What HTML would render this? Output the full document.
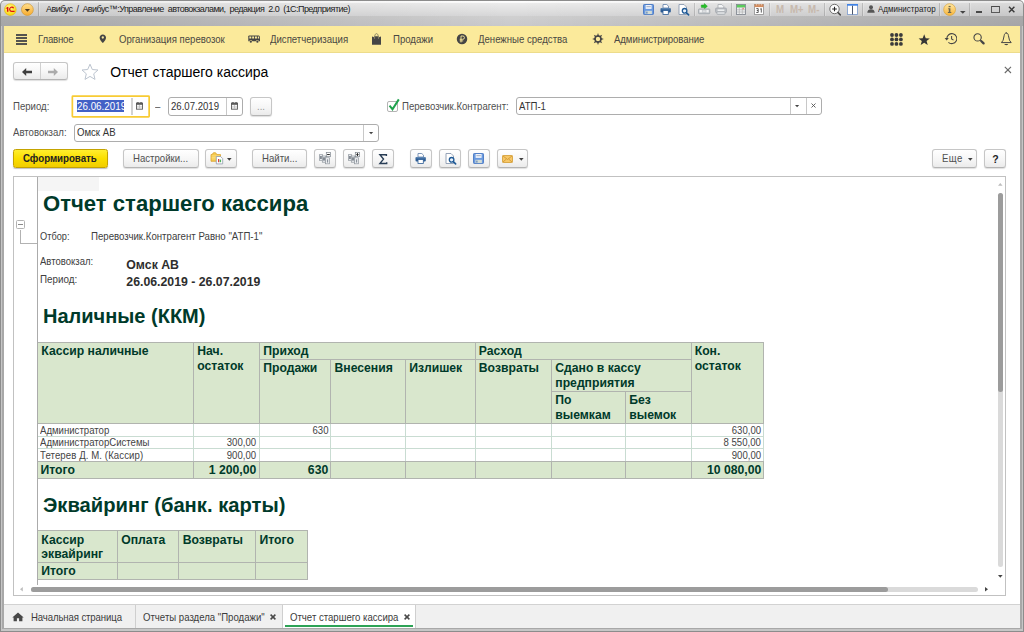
<!DOCTYPE html>
<html><head><meta charset="utf-8"><title>1C</title>
<style>
html,body{margin:0;padding:0}
body{width:1024px;height:632px;position:relative;overflow:hidden;background:#fff;font-family:"Liberation Sans", sans-serif;}
.t{position:absolute;line-height:14px;white-space:pre;font-family:"Liberation Sans", sans-serif;}
.btn{position:absolute;box-sizing:border-box;border:1px solid #c6c6c6;border-bottom-color:#b4b4b4;border-radius:3px;background:linear-gradient(#ffffff,#f6f6f6 55%,#ebebeb);box-shadow:0 1px 1px rgba(0,0,0,.13);}
.inp{position:absolute;box-sizing:border-box;border:1px solid #adadad;border-radius:3px;background:#fff;}
</style></head><body>
<div style="position:absolute;left:0;top:0;width:1024px;height:632px;background:#8c8c8c;border-radius:5px 5px 0 0;"></div>
<div style="position:absolute;left:1px;top:1px;width:1022px;height:15px;border-radius:4px 4px 0 0;background:linear-gradient(90deg,rgba(0,0,0,.075),rgba(0,0,0,.03) 30%,rgba(0,0,0,0) 50%,rgba(0,0,0,.03) 70%,rgba(0,0,0,.075)),linear-gradient(#ffffff 0px,#fbfbfb 1.5px,#ebebeb 2.5px,#d7d7d8 15px);"></div>
<div style="position:absolute;left:1px;top:16px;width:1022px;height:10px;background:linear-gradient(90deg,rgba(0,0,0,.18),rgba(0,0,0,.075) 30%,rgba(0,0,0,0) 50%,rgba(0,0,0,.075) 70%,rgba(0,0,0,.18)),linear-gradient(#d0d0d0,#c9c9cc);"></div>
<div style="position:absolute;left:1px;top:26px;width:1.3px;height:605px;background:#c6c6c6;"></div>
<div style="position:absolute;left:2.3px;top:26px;width:1.6px;height:603px;background:#a8a8a8;"></div>
<div style="position:absolute;left:1020.1px;top:26px;width:1.5px;height:603px;background:#a8a8a8;"></div>
<div style="position:absolute;left:1021.6px;top:26px;width:1.3px;height:605px;background:#c6c6c6;"></div>
<div style="position:absolute;left:2.3px;top:627.8px;width:1019.3px;height:1.4px;background:#a8a8a8;"></div>
<div style="position:absolute;left:1px;top:629.2px;width:1022px;height:1.5px;background:#c6c6c6;"></div>
<div style="position:absolute;left:3.9px;top:26px;width:1016.2px;height:27.4px;background:#fbea9b;box-shadow:inset 0 -1px 0 rgba(120,100,0,.10);"></div>
<div style="position:absolute;left:3.9px;top:53.4px;width:1016.2px;height:551px;background:#fff;"></div>
<div style="position:absolute;left:3.9px;top:604px;width:1016.2px;height:23.8px;background:#f0f0f0;"></div>
<div style="position:absolute;left:3.9px;top:603.9px;width:1016.2px;height:1.2px;background:#d2d2d2;"></div>
<svg style="position:absolute;left:4px;top:3px" width="13" height="13" viewBox="0 0 13 13"><defs><radialGradient id="g1" cx="45%" cy="35%" r="70%"><stop offset="0" stop-color="#fffb8a"/><stop offset="1" stop-color="#f9d000"/></radialGradient></defs>
<circle cx="6.3" cy="6.6" r="5.9" fill="url(#g1)" stroke="#e3b400" stroke-width=".5"/>
<path d="M1.8 5.3l1.600-1.300h1v4.700H3V5.300l-1.200 .8z" fill="#e00d0d"/>
<path d="M9.600 5.200a2.100 2.100 0 1 0-1.800 3.100h2.800" fill="none" stroke="#e00d0d" stroke-width="1.250"/></svg>
<svg style="position:absolute;left:21px;top:3px" width="13" height="13" viewBox="0 0 13 13"><defs><linearGradient id="g2" x1="0" y1="0" x2="0" y2="1"><stop offset="0" stop-color="#ffdf8c"/><stop offset="1" stop-color="#f8ab2e"/></linearGradient></defs>
<circle cx="6.4" cy="6.6" r="5.9" fill="url(#g2)" stroke="#cf9a3a" stroke-width=".7"/>
<path d="M3.800 6.100h5.200L6.400 8.800z" fill="#4a3a20"/></svg>
<div style="position:absolute;left:38px;top:2px;width:1px;height:14px;background:rgba(0,0,0,.17);"></div>
<div style="position:absolute;left:39px;top:2px;width:1px;height:14px;background:rgba(255,255,255,.22);"></div>
<span class="t" style="left:46px;top:2.48px;font-size:9px;font-weight:400;color:#1c1c1c;letter-spacing:-0.55px;word-spacing:2.1px;">Авибус / Авибус™:Управление автовокзалами, редакция 2.0 (1С:Предприятие)</span>
<svg style="position:absolute;left:643px;top:4px" width="12" height="11" viewBox="0 0 12 11"><rect x=".5" y=".5" width="10" height="10" rx=".8" fill="#6a9ae0" stroke="#4877c2" stroke-width=".9"/>
<rect x="2.6" y="1" width="6" height="3.900" fill="#edf2fb"/><rect x="3.400" y="2" width="4.400" height="1.200" fill="#aeb9cc"/><rect x="2.400" y="6.800" width="6.500" height="3.300" fill="#d3dcd6"/><rect x="3.400" y="7.600" width="1" height="2" fill="#3f6fb8"/></svg>
<svg style="position:absolute;left:660px;top:4px" width="12" height="11" viewBox="0 0 12 11"><path d="M3 4V.5h3.800l1.700 1.700V4z" fill="#fff" stroke="#5f7fa8" stroke-width=".8"/>
<rect x=".5" y="3.900" width="10.300" height="4.600" rx="1.100" fill="#2c5c94"/><rect x="1.200" y="4.300" width="8.900" height="1" fill="#6f96bf"/>
<rect x="3" y="6.600" width="5.300" height="3.900" fill="#fff" stroke="#2c5c94" stroke-width=".8"/></svg>
<svg style="position:absolute;left:678px;top:4px" width="12" height="12" viewBox="0 0 12 12"><path d="M1 .5h5l2.5 2.5v7.5H1z" fill="#fff" stroke="#8a9ab0" stroke-width=".9"/>
<circle cx="6.6" cy="6.8" r="2.3" fill="#eaf2fb" stroke="#1f5a96" stroke-width="1.3"/><path d="M8.3 8.6l2.3 2.3" stroke="#1f5a96" stroke-width="1.6" stroke-linecap="round"/></svg>
<div style="position:absolute;left:694px;top:3px;width:1px;height:13px;background:rgba(0,0,0,.15);"></div>
<div style="position:absolute;left:695px;top:3px;width:1px;height:13px;background:rgba(255,255,255,.22);"></div>
<svg style="position:absolute;left:698px;top:3px" width="13" height="12" viewBox="0 0 13 12"><path d="M6.300 .5l3.100 2.700-3.100 2.700V4.400H3.300V2h3z" fill="#27c12a" stroke="#189a1e" stroke-width=".45"/>
<rect x=".5" y="5.900" width="11.300" height="4.800" rx=".8" fill="#c3c7cb" stroke="#9aa0a6" stroke-width=".7"/><rect x="1.600" y="7" width="2.300" height="2.300" fill="#f2f3f4"/><rect x="8.400" y="7" width="2.300" height="2.300" fill="#f2f3f4"/><rect x="4.600" y="7.500" width="3.100" height="1.300" fill="#e4e6e8"/></svg>
<svg style="position:absolute;left:715px;top:4px" width="12" height="11" viewBox="0 0 12 11"><path d="M3 4.300V.5h3.800l2 2V4.300z" fill="#f4f5f6" stroke="#a4a9ae" stroke-width=".8"/>
<rect x=".5" y="4" width="11" height="4.700" rx="1.100" fill="#b9bdc2" stroke="#9aa0a6" stroke-width=".6"/><rect x="2.600" y="5.400" width="6.800" height="1.600" fill="#eceeef"/>
<rect x="2" y="7.600" width="8" height="2.900" rx=".6" fill="#d9dcdf" stroke="#a4a9ae" stroke-width=".7"/></svg>
<div style="position:absolute;left:731px;top:3px;width:1px;height:13px;background:rgba(0,0,0,.15);"></div>
<div style="position:absolute;left:732px;top:3px;width:1px;height:13px;background:rgba(255,255,255,.22);"></div>
<svg style="position:absolute;left:736px;top:4px" width="10" height="11" viewBox="0 0 10 11"><rect x=".5" y=".5" width="9" height="10" fill="#eceef0" stroke="#858b93" stroke-width=".9"/>
<rect x=".9" y=".9" width="8.2" height="2.600" fill="#5ccb5c"/>
<path d="M3.3 3.5v6.8M.9 5.8h8.2M.9 8h8.2M6.3 3.5v6.8" stroke="#aaa" stroke-width=".6"/><rect x="6.5" y="3.8" width="1.6" height="1.6" fill="#e98a8a"/></svg>
<svg style="position:absolute;left:754px;top:4px" width="10" height="11" viewBox="0 0 10 11"><rect x=".5" y=".5" width="9" height="10" fill="#ffffff" stroke="#9a9a9a" stroke-width=".9"/>
<rect x=".5" y=".3" width="9" height="2.800" fill="#d18a5c"/><path d="M2.500 0v1.500M5 0v1.500M7.500 0v1.500" stroke="#f0d0b8" stroke-width=".7"/>
<path d="M2.300 4.600h1.900v1.900h-1.300 1.300v2h-1.900M6.200 5.200l1.100-.7v4.100" fill="none" stroke="#565656" stroke-width=".95"/></svg>
<div style="position:absolute;left:769px;top:3px;width:1px;height:13px;background:rgba(0,0,0,.15);"></div>
<div style="position:absolute;left:770px;top:3px;width:1px;height:13px;background:rgba(255,255,255,.22);"></div>
<span class="t" style="left:775.5px;top:2.26px;font-size:10.5px;font-weight:700;color:#c7b9ad;transform:scaleX(0.925);transform-origin:left center;">M</span>
<span class="t" style="left:790px;top:2.26px;font-size:10.5px;font-weight:700;color:#c7b9ad;letter-spacing:-0.3px;transform:scaleX(0.925);transform-origin:left center;">M+</span>
<span class="t" style="left:807.7px;top:2.26px;font-size:10.5px;font-weight:700;color:#c7b9ad;letter-spacing:0.2px;transform:scaleX(0.925);transform-origin:left center;">M-</span>
<div style="position:absolute;left:824px;top:3px;width:1px;height:13px;background:rgba(0,0,0,.15);"></div>
<div style="position:absolute;left:825px;top:3px;width:1px;height:13px;background:rgba(255,255,255,.22);"></div>
<svg style="position:absolute;left:828px;top:3px" width="14" height="14" viewBox="0 0 14 14"><circle cx="6.5" cy="6" r="4.7" fill="#fcfcfc" stroke="#5a5a5a" stroke-width=".85"/><path d="M4.2 6h4.600M6.500 3.700v4.600" stroke="#222" stroke-width="1.050"/><path d="M10 9.600l2.300 2.300" stroke="#4a4a4a" stroke-width="1.500" stroke-linecap="round"/></svg>
<svg style="position:absolute;left:847px;top:4px" width="11" height="11" viewBox="0 0 11 11"><rect x=".5" y=".5" width="10" height="10" fill="#fff" stroke="#86a2cf" stroke-width=".9"/><rect x="0" y="0" width="11" height="1.700" fill="#3f82e6"/><path d="M5.500 1.700v8.800" stroke="#4b566b" stroke-width="1"/></svg>
<div style="position:absolute;left:862px;top:3px;width:1px;height:13px;background:rgba(0,0,0,.15);"></div>
<div style="position:absolute;left:863px;top:3px;width:1px;height:13px;background:rgba(255,255,255,.22);"></div>
<svg style="position:absolute;left:867px;top:5px" width="8" height="8" viewBox="0 0 8 8"><circle cx="4" cy="2.3" r="2" fill="#555"/><path d="M.3 7.8c0-2.6 1.6-3.6 3.7-3.6s3.7 1 3.7 3.6z" fill="#555"/></svg>
<span class="t" style="left:877.5px;top:2.20px;font-size:9.8px;font-weight:400;color:#1e1e1e;transform:scaleX(.815);transform-origin:0 0;">Администратор</span>
<div style="position:absolute;left:939px;top:3px;width:1px;height:13px;background:rgba(0,0,0,.15);"></div>
<div style="position:absolute;left:940px;top:3px;width:1px;height:13px;background:rgba(255,255,255,.22);"></div>
<svg style="position:absolute;left:943px;top:3px" width="13" height="13" viewBox="0 0 13 13"><defs><linearGradient id="g3" x1="0" y1="0" x2="0" y2="1"><stop offset="0" stop-color="#ffe8a4"/><stop offset="1" stop-color="#f8b43a"/></linearGradient></defs>
<circle cx="6.600" cy="6.600" r="5.900" fill="url(#g3)" stroke="#d9a53e" stroke-width=".7"/>
<rect x="5.600" y="2.900" width="2" height="1.300" fill="#6b6650"/><path d="M5.200 5.300h2.200v3.700h.9v1H4.900v-1h.9V6.300h-.6z" fill="#6b6650"/></svg>
<svg style="position:absolute;left:960px;top:11px" width="6" height="3" viewBox="0 0 6 3"><path d="M0 0h5.6L2.8 2.8z" fill="#444"/></svg>
<div style="position:absolute;left:969px;top:3px;width:1px;height:13px;background:rgba(0,0,0,.15);"></div>
<div style="position:absolute;left:970px;top:3px;width:1px;height:13px;background:rgba(255,255,255,.22);"></div>
<div style="position:absolute;left:975.8px;top:11.1px;width:6px;height:1.8px;background:#484848;"></div>
<div style="position:absolute;left:991.2px;top:5.9px;width:8.4px;height:7px;border:1px solid #5a5a5a;border-top:1.700px solid #4a4a4a;box-sizing:border-box;"></div>
<svg style="position:absolute;left:1008px;top:6px" width="8" height="7" viewBox="0 0 8 7"><path d="M1 .8l5.400 5.400M6.400 .8L1 6.200" stroke="#3a3a3a" stroke-width="1.450"/></svg>
<div style="position:absolute;left:16.4px;top:34.3px;width:10.6px;height:1.5px;background:#55544f;"></div>
<div style="position:absolute;left:16.4px;top:37.349999999999994px;width:10.6px;height:1.5px;background:#55544f;"></div>
<div style="position:absolute;left:16.4px;top:40.4px;width:10.6px;height:1.5px;background:#55544f;"></div>
<div style="position:absolute;left:16.4px;top:43.449999999999996px;width:10.6px;height:1.5px;background:#55544f;"></div>
<span class="t" style="left:38px;top:32.06px;font-size:10.5px;font-weight:400;color:#4a4843;letter-spacing:-.2px;transform:scaleX(0.914);transform-origin:left center;">Главное</span>
<svg style="position:absolute;left:98px;top:34.4px" width="10" height="10" viewBox="0 0 10 10"><path d="M4.800 .6c-1.800 0-3.200 1.400-3.200 3.100 0 2.200 3.200 5.400 3.200 5.400s3.200-3.200 3.200-5.400C8 2 6.600 .6 4.800 .6z" fill="#454545"/><circle cx="4.800" cy="3.500" r="1.150" fill="#fbea9b"/></svg>
<span class="t" style="left:119.3px;top:32.06px;font-size:10.5px;font-weight:400;color:#4a4843;transform:scaleX(0.914);transform-origin:left center;">Организация перевозок</span>
<svg style="position:absolute;left:247.7px;top:35.2px" width="12.6" height="8.3" viewBox="0 0 13 8.500"><path d="M1.200 .4h9.400c.8 0 1.400 .5 1.600 1.300l.5 2.200v2.400H.3V1.300C.3 .8 .7 .4 1.200 .4z" fill="#454545"/>
<rect x="1.400" y="1.500" width="2" height="2.100" fill="#fbea9b"/><rect x="4.300" y="1.500" width="2" height="2.100" fill="#fbea9b"/><rect x="7.200" y="1.500" width="2" height="2.100" fill="#fbea9b"/><path d="M10.100 1.500h1.100l.5 2.100h-1.600z" fill="#fbea9b"/>
<circle cx="2.900" cy="6.800" r="1.650" fill="#fbea9b"/><circle cx="9.700" cy="6.800" r="1.650" fill="#fbea9b"/>
<circle cx="2.900" cy="6.900" r="1.150" fill="#454545"/><circle cx="9.700" cy="6.900" r="1.150" fill="#454545"/></svg>
<span class="t" style="left:269.8px;top:32.06px;font-size:10.5px;font-weight:400;color:#4a4843;transform:scaleX(0.914);transform-origin:left center;">Диспетчеризация</span>
<svg style="position:absolute;left:371px;top:33px" width="11" height="12" viewBox="0 0 11 12"><path d="M1 3.300l1.300 .9 1.200-.9h4l1.200 .9 1.300-.9v8.500H1z" fill="#454545"/><path d="M3.500 5.800C3.500 2.200 4.300 .6 5.500 .6s2 1.600 2 5.200" fill="none" stroke="#8d8768" stroke-width=".95"/></svg>
<span class="t" style="left:393.2px;top:32.06px;font-size:10.5px;font-weight:400;color:#4a4843;transform:scaleX(0.914);transform-origin:left center;">Продажи</span>
<svg style="position:absolute;left:456.1px;top:33.2px" width="12" height="12" viewBox="0 0 12 12"><circle cx="6" cy="6" r="5.250" fill="#454545"/><path d="M5 9.400V3h1.800a1.650 1.650 0 0 1 0 3.300H3.700M3.700 7.900h3.500" fill="none" stroke="#fbea9b" stroke-width=".9"/></svg>
<span class="t" style="left:478.2px;top:32.06px;font-size:10.5px;font-weight:400;color:#4a4843;transform:scaleX(0.914);transform-origin:left center;">Денежные средства</span>
<svg style="position:absolute;left:591.5px;top:33.4px" width="12" height="12" viewBox="0 0 12 12"><path d="M4.750 3.500L6 .1l1.250 3.400z" transform="rotate(0 6 6)" fill="#454545"/><path d="M4.750 3.500L6 .1l1.250 3.400z" transform="rotate(45 6 6)" fill="#454545"/><path d="M4.750 3.500L6 .1l1.250 3.400z" transform="rotate(90 6 6)" fill="#454545"/><path d="M4.750 3.500L6 .1l1.250 3.400z" transform="rotate(135 6 6)" fill="#454545"/><path d="M4.750 3.500L6 .1l1.250 3.400z" transform="rotate(180 6 6)" fill="#454545"/><path d="M4.750 3.500L6 .1l1.250 3.400z" transform="rotate(225 6 6)" fill="#454545"/><path d="M4.750 3.500L6 .1l1.250 3.400z" transform="rotate(270 6 6)" fill="#454545"/><path d="M4.750 3.500L6 .1l1.250 3.400z" transform="rotate(315 6 6)" fill="#454545"/><circle cx="6" cy="6" r="2.950" fill="none" stroke="#454545" stroke-width="1.500"/></svg>
<span class="t" style="left:613.8px;top:32.06px;font-size:10.5px;font-weight:400;color:#4a4843;letter-spacing:-.08px;transform:scaleX(0.914);transform-origin:left center;">Администрирование</span>
<svg style="position:absolute;left:890px;top:32.6px" width="13" height="13" viewBox="0 0 13 13"><circle cx="2.00" cy="2.00" r="1.900" fill="#3b3b3b"/><circle cx="2.00" cy="6.45" r="1.900" fill="#3b3b3b"/><circle cx="2.00" cy="10.90" r="1.900" fill="#3b3b3b"/><circle cx="6.45" cy="2.00" r="1.900" fill="#3b3b3b"/><circle cx="6.45" cy="6.45" r="1.900" fill="#3b3b3b"/><circle cx="6.45" cy="10.90" r="1.900" fill="#3b3b3b"/><circle cx="10.90" cy="2.00" r="1.900" fill="#3b3b3b"/><circle cx="10.90" cy="6.45" r="1.900" fill="#3b3b3b"/><circle cx="10.90" cy="10.90" r="1.900" fill="#3b3b3b"/></svg>
<svg style="position:absolute;left:917.7px;top:33.8px" width="12.4" height="11.6" viewBox="0 0 13 12"><path d="M6.500 .3l1.600 4.100 4.300 .2-3.400 2.700 1.200 4.200L6.500 9.100 2.800 11.500 4 7.300 .6 4.600l4.300-.2z" fill="#363636"/></svg>
<svg style="position:absolute;left:943.9px;top:32.1px" width="13.5" height="13" viewBox="0 0 13.5 13"><path d="M2.800 6.700a5 5 0 1 1 1.600 3.600" fill="none" stroke="#454545" stroke-width="1.050"/><path d="M.6 5.900h4.200L2.700 8.400z" fill="#454545"/><path d="M7.600 3.900v3l1.900 1.200" fill="none" stroke="#454545" stroke-width="1.050"/></svg>
<svg style="position:absolute;left:972px;top:32px" width="14" height="14" viewBox="0 0 14 14"><circle cx="5.600" cy="5.400" r="3.650" fill="none" stroke="#454545" stroke-width="1.100"/><path d="M8.300 8.100l1 1" stroke="#454545" stroke-width="1.100"/><path d="M9.400 9.200l2.200 2.200" stroke="#454545" stroke-width="2.300" stroke-linecap="round"/></svg>
<svg style="position:absolute;left:1000px;top:32px" width="13" height="14" viewBox="0 0 13 14"><path d="M6.300 1C5.100 1 4.400 2 4.200 3.500L3.100 8.300 1.400 10.600H11.200L9.500 8.300 8.400 3.500C8.200 2 7.500 1 6.300 1z" fill="none" stroke="#454545" stroke-width="1" stroke-linejoin="round"/><path d="M4.300 12.100h3.900a1.950 1.150 0 0 1-3.900 0z" fill="#454545"/><circle cx="6.300" cy=".9" r=".6" fill="#454545"/></svg>
<div class="btn" style="left:13px;top:62px;width:54.500px;height:18px;"></div>
<div style="position:absolute;left:40px;top:63px;width:1px;height:16px;background:#d0d0d0;"></div>
<svg style="position:absolute;left:21px;top:67px" width="12" height="10" viewBox="0 0 12 10"><path d="M1 5l4.200-4v2.800h5.800v2.400H5.200V9z" fill="#3f3f3f"/></svg>
<svg style="position:absolute;left:47px;top:67px" width="12" height="10" viewBox="0 0 12 10"><path d="M11 5L6.800 1v2.800H1v2.400h5.800V9z" fill="#ababab"/></svg>
<svg style="position:absolute;left:80.5px;top:63px" width="18" height="17" viewBox="0 0 18 17"><path d="M9 1.200l2.300 5.300 5.700 .5-4.300 3.800 1.300 5.600L9 13.400 4 16.400l1.300-5.600L1 7l5.700-.5z" fill="#fff" stroke="#bcc4cf" stroke-width="1"/></svg>
<span class="t" style="left:110.2px;top:65.15px;font-size:14px;font-weight:400;color:#000;">Отчет старшего кассира</span>
<svg style="position:absolute;left:1004px;top:66px" width="8" height="8" viewBox="0 0 8 8"><path d="M.8 .8l6.200 6.200M7 .8L.8 7" stroke="#6a6a6a" stroke-width="1.100"/></svg>
<span class="t" style="left:13px;top:98.86px;font-size:10.5px;font-weight:400;color:#4f4f4f;transform:scaleX(0.914);transform-origin:left center;">Период:</span>
<svg style="position:absolute;left:70px;top:94px" width="82" height="26" viewBox="0 0 82 26"><rect x="2.350" y="2.150" width="76.800" height="20.800" rx=".6" fill="#fff" stroke="#f8cb34" stroke-width="1.700"/></svg>
<div style="position:absolute;left:76.8px;top:100.3px;width:47.3px;height:11.7px;background:#4261c6;"></div>
<div style="position:absolute;left:77px;top:100px;width:47.100px;height:13px;overflow:hidden;"><span class="t" style="left:.3px;top:-0.900px;font-size:10.500px;color:#fff;transform:scaleX(.935);transform-origin:left center;">26.06.2019</span></div>
<div style="position:absolute;left:131.4px;top:98.2px;width:1.4px;height:16.6px;background:#d2d2d2;"></div>
<svg style="position:absolute;left:136px;top:102.3px" width="7" height="7.7" viewBox="0 0 7 7.7"><rect x="1.300" y="0" width="1.300" height="1.400" fill="#5a5a5a"/><rect x="4.400" y="0" width="1.300" height="1.400" fill="#5a5a5a"/><rect x=".45" y="1.200" width="6.100" height="6" fill="#f6f6f6" stroke="#5a5a5a" stroke-width=".9"/><rect x="0" y=".8" width="7" height="2" fill="#5a5a5a"/><path d="M3.500 3v3.700M1 4.950h5" stroke="#b4b4b4" stroke-width=".7"/></svg>
<span class="t" style="left:155px;top:98.66px;font-size:10.5px;font-weight:400;color:#4f4f4f;transform:scaleX(0.914);transform-origin:left center;">–</span>
<div class="inp" style="left:168px;top:97px;width:74.500px;height:19px;"></div>
<span class="t" style="left:171px;top:98.86px;font-size:10.5px;font-weight:400;color:#333;transform:scaleX(0.914);transform-origin:left center;">26.07.2019</span>
<div style="position:absolute;left:226px;top:98px;width:1px;height:17px;background:#c8c8c8;"></div>
<svg style="position:absolute;left:231px;top:102.3px" width="7" height="7.7" viewBox="0 0 7 7.7"><rect x="1.300" y="0" width="1.300" height="1.400" fill="#5a5a5a"/><rect x="4.400" y="0" width="1.300" height="1.400" fill="#5a5a5a"/><rect x=".45" y="1.200" width="6.100" height="6" fill="#f6f6f6" stroke="#5a5a5a" stroke-width=".9"/><rect x="0" y=".8" width="7" height="2" fill="#5a5a5a"/><path d="M3.500 3v3.700M1 4.950h5" stroke="#b4b4b4" stroke-width=".7"/></svg>
<div class="btn" style="left:250px;top:97px;width:22px;height:19px;"></div>
<span class="t" style="left:257px;top:98.86px;font-size:10.5px;font-weight:400;color:#999;transform:scaleX(0.914);transform-origin:left center;">...</span>
<div style="position:absolute;left:387px;top:101px;width:11px;height:10.500px;box-sizing:border-box;border:1px solid #b4b4b4;border-radius:2px;background:#fff;"></div>
<svg style="position:absolute;left:387px;top:98px" width="14" height="14" viewBox="0 0 14 14"><path d="M2.500 7.600l3 3.600 6.300-9.800" fill="none" stroke="#1fa24d" stroke-width="2"/></svg>
<span class="t" style="left:402.3px;top:98.56px;font-size:10.5px;font-weight:400;color:#4f4f4f;transform:scaleX(0.914);transform-origin:left center;">Перевозчик.Контрагент:</span>
<div class="inp" style="left:516px;top:96.500px;width:305.500px;height:18.500px;"></div>
<span class="t" style="left:519.2px;top:98.56px;font-size:10.5px;font-weight:400;color:#333;transform:scaleX(0.914);transform-origin:left center;">АТП-1</span>
<div style="position:absolute;left:789.5px;top:97.5px;width:1px;height:16.5px;background:#c8c8c8;"></div>
<div style="position:absolute;left:805.5px;top:97.5px;width:1px;height:16.5px;background:#c8c8c8;"></div>
<svg style="position:absolute;left:795.3px;top:104.8px" width="5" height="3" viewBox="0 0 5 3"><path d="M0 0h4.200L2.100 2.300z" fill="#444"/></svg>
<svg style="position:absolute;left:810.5px;top:103.3px" width="5" height="5" viewBox="0 0 5 5"><path d="M.5 .5l4 4M4.500 .5l-4 4" stroke="#555" stroke-width=".9"/></svg>
<span class="t" style="left:13px;top:124.96px;font-size:10.5px;font-weight:400;color:#4f4f4f;transform:scaleX(0.914);transform-origin:left center;">Автовокзал:</span>
<div class="inp" style="left:73.500px;top:123.500px;width:305px;height:18.500px;"></div>
<span class="t" style="left:76.7px;top:124.96px;font-size:10.5px;font-weight:400;color:#333;transform:scaleX(0.914);transform-origin:left center;">Омск АВ</span>
<div style="position:absolute;left:363px;top:124.5px;width:1px;height:16.5px;background:#c8c8c8;"></div>
<svg style="position:absolute;left:368.8px;top:131.8px" width="5" height="3" viewBox="0 0 5 3"><path d="M0 0h4.200L2.100 2.300z" fill="#444"/></svg>
<div style="position:absolute;left:13px;top:148.8px;width:95px;height:18.8px;box-sizing:border-box;border:1px solid #c4a300;border-radius:2.500px;background:linear-gradient(#ffee2e,#fbdf00 50%,#f1cd00);box-shadow:0 1px 1px rgba(0,0,0,.25);"></div>
<span class="t" style="left:23.2px;top:151.36px;font-size:10.5px;font-weight:700;color:#222;letter-spacing:-0.02px;transform:scaleX(0.925);transform-origin:left center;">Сформировать</span>
<div class="btn" style="left:123px;top:148.8px;width:75.5px;height:18.8px;"></div>
<span class="t" style="left:133.2px;top:151.36px;font-size:10.5px;font-weight:400;color:#505050;transform:scaleX(0.914);transform-origin:left center;">Настройки...</span>
<div class="btn" style="left:205px;top:148.8px;width:31.5px;height:18.8px;"></div>
<svg style="position:absolute;left:210px;top:152px" width="14" height="12.5" viewBox="0 0 14 12.5"><path d="M1 2.600h1.200c.3-1.200 1.100-2 2.300-2s2 .8 2.300 2h3.700v6.700H1z" fill="#f4c94e" stroke="#d9a233" stroke-width=".8"/>
<path d="M1.600 3.900h8.300M1.600 5.400h5M1.600 6.900h5" stroke="#ffe58c" stroke-width=".7"/>
<path d="M6.300 4.500h4.300l2.100 2.100v5.300H6.300z" fill="#fff" stroke="#8e9bab" stroke-width=".8"/><rect x="8" y="7" width="1.200" height="3.200" fill="#e0393a"/><rect x="9.600" y="7.600" width="1.500" height="2.600" fill="#4db35a"/></svg>
<svg style="position:absolute;left:227.3px;top:158px" width="5" height="3" viewBox="0 0 5 3"><path d="M0 0h4.600L2.300 2.800z" fill="#404040"/></svg>
<div class="btn" style="left:251.5px;top:148.8px;width:55.5px;height:18.8px;"></div>
<span class="t" style="left:261.6px;top:151.36px;font-size:10.5px;font-weight:400;color:#505050;transform:scaleX(0.914);transform-origin:left center;">Найти...</span>
<div class="btn" style="left:314.3px;top:148.8px;width:22px;height:18.8px;"></div>
<div class="btn" style="left:343.2px;top:148.8px;width:22px;height:18.8px;"></div>
<svg style="position:absolute;left:319px;top:152.2px" width="12" height="12.5" viewBox="0 0 12 12.5"><rect x=".4" y="2.700" width="3.300" height="5.600" fill="#eceef1" stroke="#8d949c" stroke-width=".7"/><rect x="1.300" y="4" width="1.300" height="3" fill="#59616b"/><rect x="3.300" y="4" width="3.500" height="6.200" fill="#eceef1" stroke="#8d949c" stroke-width=".7"/><rect x="4.300" y="5.300" width="1.400" height="3.300" fill="#59616b"/><rect x="6.600" y="5.800" width="4" height="6" fill="#f4f5f7" stroke="#8d949c" stroke-width=".7"/><rect x="7.900" y="7.300" width="1.300" height="3.300" fill="#8a929c"/><rect x="7.300" y=".4" width="4.300" height="4.300" fill="#fff" stroke="#7d848c" stroke-width=".7"/><path d="M8.100 2.550h2.700" stroke="#222" stroke-width="1"/></svg>
<svg style="position:absolute;left:348px;top:152.2px" width="12" height="12.5" viewBox="0 0 12 12.5"><rect x=".4" y="2.700" width="3.300" height="5.600" fill="#eceef1" stroke="#8d949c" stroke-width=".7"/><rect x="1.300" y="4" width="1.300" height="3" fill="#59616b"/><rect x="3.300" y="4" width="3.500" height="6.200" fill="#eceef1" stroke="#8d949c" stroke-width=".7"/><rect x="4.300" y="5.300" width="1.400" height="3.300" fill="#59616b"/><rect x="6.600" y="5.800" width="4" height="6" fill="#f4f5f7" stroke="#8d949c" stroke-width=".7"/><rect x="7.900" y="7.300" width="1.300" height="3.300" fill="#8a929c"/><rect x="7.300" y=".4" width="4.300" height="4.300" fill="#fff" stroke="#7d848c" stroke-width=".7"/><path d="M9.450 1.100v2.900" stroke="#222" stroke-width="1"/><path d="M8.200 2.550h2.500" stroke="#222" stroke-width=".8"/></svg>
<div class="btn" style="left:372.3px;top:148.8px;width:22px;height:18.8px;"></div>
<svg style="position:absolute;left:378px;top:152.5px" width="10" height="12" viewBox="0 0 10 12"><path d="M8.400 3V1.700H1.900L5.500 6.100 1.900 10.500h6.800V9.200" fill="none" stroke="#283d55" stroke-width="1.400" stroke-linejoin="miter"/></svg>
<div class="btn" style="left:409.5px;top:148.8px;width:22px;height:18.8px;"></div>
<svg style="position:absolute;left:415px;top:153px" width="12" height="11" viewBox="0 0 12 11"><path d="M3 4V.5h3.800l1.700 1.700V4z" fill="#fff" stroke="#5f7fa8" stroke-width=".8"/>
<rect x=".5" y="3.900" width="10.300" height="4.600" rx="1.100" fill="#2c5c94"/><rect x="1.200" y="4.300" width="8.900" height="1" fill="#6f96bf"/>
<rect x="3" y="6.600" width="5.300" height="3.900" fill="#fff" stroke="#2c5c94" stroke-width=".8"/></svg>
<div class="btn" style="left:438.5px;top:148.8px;width:22px;height:18.8px;"></div>
<svg style="position:absolute;left:444.5px;top:152.5px" width="12" height="12" viewBox="0 0 12 12"><path d="M1 .5h5l2.500 2.500v7.500H1z" fill="#fff" stroke="#8a9ab0" stroke-width=".9"/>
<circle cx="6.600" cy="6.800" r="2.300" fill="#eaf2fb" stroke="#1f5a96" stroke-width="1.300"/><path d="M8.300 8.600l2.300 2.300" stroke="#1f5a96" stroke-width="1.600" stroke-linecap="round"/></svg>
<div class="btn" style="left:467.5px;top:148.8px;width:22px;height:18.8px;"></div>
<svg style="position:absolute;left:473px;top:153px" width="12" height="11" viewBox="0 0 12 11"><rect x=".5" y=".5" width="10" height="10" rx=".8" fill="#6a9ae0" stroke="#4877c2" stroke-width=".9"/>
<rect x="2.6" y="1" width="6" height="3.900" fill="#edf2fb"/><rect x="3.400" y="2" width="4.400" height="1.200" fill="#aeb9cc"/><rect x="2.400" y="6.800" width="6.500" height="3.300" fill="#d3dcd6"/><rect x="3.400" y="7.600" width="1" height="2" fill="#3f6fb8"/></svg>
<div class="btn" style="left:496.5px;top:148.8px;width:31px;height:18.8px;"></div>
<svg style="position:absolute;left:502px;top:154.5px" width="11" height="8" viewBox="0 0 11 8"><rect x=".5" y=".5" width="10" height="7" rx=".8" fill="#f6c768" stroke="#d39a2e" stroke-width=".8"/><path d="M.8 .8l4.700 3.700L10.200 .8M.8 7.200l3.400-3M10.200 7.200l-3.400-3" fill="none" stroke="#c98c22" stroke-width=".7"/></svg>
<svg style="position:absolute;left:518.5px;top:158px" width="5" height="3" viewBox="0 0 5 3"><path d="M0 0h4.600L2.300 2.800z" fill="#404040"/></svg>
<div class="btn" style="left:932px;top:148.8px;width:44.5px;height:18.8px;"></div>
<span class="t" style="left:942.2px;top:151.36px;font-size:10.5px;font-weight:400;color:#505050;letter-spacing:.5px;transform:scaleX(0.914);transform-origin:left center;">Еще</span>
<svg style="position:absolute;left:967.8px;top:158px" width="5" height="3" viewBox="0 0 5 3"><path d="M0 0h4.600L2.300 2.800z" fill="#404040"/></svg>
<div class="btn" style="left:984px;top:148.8px;width:22px;height:18.8px;"></div>
<span class="t" style="left:992.3px;top:151.66px;font-size:10.5px;font-weight:700;color:#222;">?</span>
<div style="position:absolute;left:13px;top:175.500px;width:993px;height:420px;box-sizing:border-box;border:1px solid #c1c1c1;background:#fff;"></div>
<div style="position:absolute;left:37.3px;top:176.5px;width:1px;height:408px;background:#ababab;"></div>
<div style="position:absolute;left:38.3px;top:176.5px;width:61px;height:14.2px;background:#f5f5f5;"></div>
<div style="position:absolute;left:15.800px;top:219.800px;width:9.700px;height:9.700px;box-sizing:border-box;border:1px solid #b2b2b2;border-radius:1.500px;background:#fff;"></div>
<div style="position:absolute;left:17.8px;top:224.2px;width:5.7px;height:1px;background:#8a8a8a;"></div>
<div style="position:absolute;left:20.2px;top:229.5px;width:1px;height:14px;background:#b2b2b2;"></div>
<div style="position:absolute;left:20.2px;top:243px;width:17.2px;height:1px;background:#b2b2b2;"></div>
<span class="t" style="left:43px;top:196.64px;font-size:22.1px;font-weight:700;color:#003a2a;">Отчет старшего кассира</span>
<span class="t" style="left:39.8px;top:230.17px;font-size:10.2px;font-weight:400;color:#404040;transform:scaleX(.905);transform-origin:left center;">Отбор:</span>
<span class="t" style="left:90.8px;top:230.17px;font-size:10.2px;font-weight:400;color:#404040;transform:scaleX(.948);transform-origin:left center;">Перевозчик.Контрагент Равно "АТП-1"</span>
<span class="t" style="left:40px;top:255.37px;font-size:10.2px;font-weight:400;color:#404040;transform:scaleX(.935);transform-origin:left center;">Автовокзал:</span>
<span class="t" style="left:126.3px;top:258.04px;font-size:12.3px;font-weight:700;color:#2e2e2e;">Омск АВ</span>
<span class="t" style="left:39.8px;top:272.57px;font-size:10.2px;font-weight:400;color:#404040;transform:scaleX(.965);transform-origin:left center;">Период:</span>
<span class="t" style="left:126.3px;top:274.74px;font-size:12.3px;font-weight:700;color:#2e2e2e;">26.06.2019 - 26.07.2019</span>
<span class="t" style="left:43px;top:309.07px;font-size:20px;font-weight:700;color:#003a2a;">Наличные (ККМ)</span>
<div style="position:absolute;left:37.8px;top:342.5px;width:725.8000000000001px;height:80.89999999999998px;background:#d9e7cd;"></div>
<div style="position:absolute;left:37.8px;top:461.3px;width:725.8000000000001px;height:16.899999999999977px;background:#d9e7cd;"></div>
<div style="position:absolute;left:37.8px;top:436.0px;width:726.3000000000001px;height:1px;background:#c9dcd2;"></div>
<div style="position:absolute;left:37.8px;top:448.3px;width:726.3000000000001px;height:1px;background:#c9dcd2;"></div>
<div style="position:absolute;left:193.0px;top:423.4px;width:1px;height:38.400000000000034px;background:#c9dcd2;"></div>
<div style="position:absolute;left:258.8px;top:423.4px;width:1px;height:38.400000000000034px;background:#c9dcd2;"></div>
<div style="position:absolute;left:330.2px;top:423.4px;width:1px;height:38.400000000000034px;background:#c9dcd2;"></div>
<div style="position:absolute;left:404.9px;top:423.4px;width:1px;height:38.400000000000034px;background:#c9dcd2;"></div>
<div style="position:absolute;left:474.5px;top:423.4px;width:1px;height:38.400000000000034px;background:#c9dcd2;"></div>
<div style="position:absolute;left:551.0px;top:423.4px;width:1px;height:38.400000000000034px;background:#c9dcd2;"></div>
<div style="position:absolute;left:624.9px;top:423.4px;width:1px;height:38.400000000000034px;background:#c9dcd2;"></div>
<div style="position:absolute;left:690.6px;top:423.4px;width:1px;height:38.400000000000034px;background:#c9dcd2;"></div>
<div style="position:absolute;left:763.1px;top:423.4px;width:1px;height:38.400000000000034px;background:#c9dcd2;"></div>
<div style="position:absolute;left:37.8px;top:342.0px;width:726.3000000000001px;height:1px;background:#b1b4af;"></div>
<div style="position:absolute;left:37.8px;top:422.9px;width:726.3000000000001px;height:1px;background:#b1b4af;"></div>
<div style="position:absolute;left:259.3px;top:359.0px;width:432.3px;height:1px;background:#b1b4af;"></div>
<div style="position:absolute;left:551.5px;top:390.9px;width:140.10000000000002px;height:1px;background:#b1b4af;"></div>
<div style="position:absolute;left:193.0px;top:342.5px;width:1px;height:81.39999999999998px;background:#b1b4af;"></div>
<div style="position:absolute;left:258.8px;top:342.5px;width:1px;height:81.39999999999998px;background:#b1b4af;"></div>
<div style="position:absolute;left:690.6px;top:342.5px;width:1px;height:81.39999999999998px;background:#b1b4af;"></div>
<div style="position:absolute;left:763.1px;top:342.5px;width:1px;height:81.39999999999998px;background:#b1b4af;"></div>
<div style="position:absolute;left:330.2px;top:359.5px;width:1px;height:64.39999999999998px;background:#b1b4af;"></div>
<div style="position:absolute;left:404.9px;top:359.5px;width:1px;height:64.39999999999998px;background:#b1b4af;"></div>
<div style="position:absolute;left:551.0px;top:359.5px;width:1px;height:64.39999999999998px;background:#b1b4af;"></div>
<div style="position:absolute;left:474.5px;top:342.5px;width:1px;height:81.39999999999998px;background:#b1b4af;"></div>
<div style="position:absolute;left:624.9px;top:391.4px;width:1px;height:32.5px;background:#b1b4af;"></div>
<div style="position:absolute;left:37.8px;top:460.8px;width:726.3000000000001px;height:1px;background:#b1b4af;"></div>
<div style="position:absolute;left:37.8px;top:477.7px;width:726.3000000000001px;height:1px;background:#b1b4af;"></div>
<div style="position:absolute;left:193.0px;top:461.3px;width:1px;height:17.399999999999977px;background:#b1b4af;"></div>
<div style="position:absolute;left:258.8px;top:461.3px;width:1px;height:17.399999999999977px;background:#b1b4af;"></div>
<div style="position:absolute;left:330.2px;top:461.3px;width:1px;height:17.399999999999977px;background:#b1b4af;"></div>
<div style="position:absolute;left:404.9px;top:461.3px;width:1px;height:17.399999999999977px;background:#b1b4af;"></div>
<div style="position:absolute;left:474.5px;top:461.3px;width:1px;height:17.399999999999977px;background:#b1b4af;"></div>
<div style="position:absolute;left:551.0px;top:461.3px;width:1px;height:17.399999999999977px;background:#b1b4af;"></div>
<div style="position:absolute;left:624.9px;top:461.3px;width:1px;height:17.399999999999977px;background:#b1b4af;"></div>
<div style="position:absolute;left:690.6px;top:461.3px;width:1px;height:17.399999999999977px;background:#b1b4af;"></div>
<div style="position:absolute;left:763.1px;top:461.3px;width:1px;height:17.399999999999977px;background:#b1b4af;"></div>
<span class="t" style="left:41.3px;top:344.42px;font-size:12.2px;font-weight:700;color:#003a2a;">Кассир наличные</span>
<span class="t" style="left:197.3px;top:344.42px;font-size:12.2px;font-weight:700;color:#003a2a;">Нач.</span>
<span class="t" style="left:197.3px;top:359.12px;font-size:12.2px;font-weight:700;color:#003a2a;">остаток</span>
<span class="t" style="left:263.2px;top:344.42px;font-size:12.2px;font-weight:700;color:#003a2a;">Приход</span>
<span class="t" style="left:263.2px;top:361.02px;font-size:12.2px;font-weight:700;color:#003a2a;">Продажи</span>
<span class="t" style="left:334.5px;top:361.02px;font-size:12.2px;font-weight:700;color:#003a2a;">Внесения</span>
<span class="t" style="left:409.3px;top:361.02px;font-size:12.2px;font-weight:700;color:#003a2a;">Излишек</span>
<span class="t" style="left:478.8px;top:344.42px;font-size:12.2px;font-weight:700;color:#003a2a;">Расход</span>
<span class="t" style="left:478.8px;top:361.02px;font-size:12.2px;font-weight:700;color:#003a2a;">Возвраты</span>
<span class="t" style="left:555.3px;top:361.02px;font-size:12.2px;font-weight:700;color:#003a2a;">Сдано в кассу</span>
<span class="t" style="left:555.3px;top:375.72px;font-size:12.2px;font-weight:700;color:#003a2a;">предприятия</span>
<span class="t" style="left:555.3px;top:392.82px;font-size:12.2px;font-weight:700;color:#003a2a;">По</span>
<span class="t" style="left:555.3px;top:407.52px;font-size:12.2px;font-weight:700;color:#003a2a;">выемкам</span>
<span class="t" style="left:629.3px;top:392.82px;font-size:12.2px;font-weight:700;color:#003a2a;">Без</span>
<span class="t" style="left:629.3px;top:407.52px;font-size:12.2px;font-weight:700;color:#003a2a;">выемок</span>
<span class="t" style="left:694.7px;top:344.42px;font-size:12.2px;font-weight:700;color:#003a2a;">Кон.</span>
<span class="t" style="left:694.7px;top:359.12px;font-size:12.2px;font-weight:700;color:#003a2a;">остаток</span>
<span class="t" style="left:40px;top:423.36px;font-size:10.5px;font-weight:400;color:#444;transform:scaleX(0.914);transform-origin:left center;">Администратор</span>
<span class="t" style="left:40px;top:435.46px;font-size:10.5px;font-weight:400;color:#444;transform:scaleX(0.914);transform-origin:left center;">АдминистраторСистемы</span>
<span class="t" style="left:40px;top:447.66px;font-size:10.5px;font-weight:400;color:#444;letter-spacing:.1px;transform:scaleX(0.914);transform-origin:left center;">Тетерев Д. М. (Кассир)</span>
<span class="t" style="right:695.8px;top:423.36px;font-size:10.5px;font-weight:400;color:#444;transform:scaleX(0.914);transform-origin:right center;">630</span>
<span class="t" style="right:767.8px;top:435.46px;font-size:10.5px;font-weight:400;color:#444;transform:scaleX(0.914);transform-origin:right center;">300,00</span>
<span class="t" style="right:767.8px;top:447.66px;font-size:10.5px;font-weight:400;color:#444;transform:scaleX(0.914);transform-origin:right center;">900,00</span>
<span class="t" style="right:262.79999999999995px;top:423.36px;font-size:10.5px;font-weight:400;color:#444;transform:scaleX(0.914);transform-origin:right center;">630,00</span>
<span class="t" style="right:262.79999999999995px;top:435.46px;font-size:10.5px;font-weight:400;color:#444;transform:scaleX(0.914);transform-origin:right center;">8 550,00</span>
<span class="t" style="right:262.79999999999995px;top:447.66px;font-size:10.5px;font-weight:400;color:#444;transform:scaleX(0.914);transform-origin:right center;">900,00</span>
<span class="t" style="left:40.5px;top:463.12px;font-size:12.2px;font-weight:700;color:#003a2a;">Итого</span>
<span class="t" style="right:767.7px;top:462.77px;font-size:12.2px;font-weight:700;color:#003a2a;">1 200,00</span>
<span class="t" style="right:695.8px;top:462.77px;font-size:12.2px;font-weight:700;color:#003a2a;">630</span>
<span class="t" style="right:262.79999999999995px;top:462.77px;font-size:12.2px;font-weight:700;color:#003a2a;">10 080,00</span>
<span class="t" style="left:43px;top:497.70px;font-size:20.2px;font-weight:700;color:#003a2a;">Эквайринг (банк. карты)</span>
<div style="position:absolute;left:37.8px;top:530.4px;width:269.7px;height:48.89999999999998px;background:#d9e7cd;"></div>
<div style="position:absolute;left:37.8px;top:529.9px;width:270.2px;height:1px;background:#b1b4af;"></div>
<div style="position:absolute;left:37.8px;top:562.1px;width:270.2px;height:1px;background:#b1b4af;"></div>
<div style="position:absolute;left:37.8px;top:578.8px;width:270.2px;height:1px;background:#b1b4af;"></div>
<div style="position:absolute;left:116.8px;top:530.4px;width:1px;height:49.39999999999998px;background:#b1b4af;"></div>
<div style="position:absolute;left:178.3px;top:530.4px;width:1px;height:49.39999999999998px;background:#b1b4af;"></div>
<div style="position:absolute;left:255.1px;top:530.4px;width:1px;height:49.39999999999998px;background:#b1b4af;"></div>
<div style="position:absolute;left:307.0px;top:530.4px;width:1px;height:49.39999999999998px;background:#b1b4af;"></div>
<span class="t" style="left:41.3px;top:532.72px;font-size:12.2px;font-weight:700;color:#003a2a;">Кассир</span>
<span class="t" style="left:41.3px;top:547.42px;font-size:12.2px;font-weight:700;color:#003a2a;">эквайринг</span>
<span class="t" style="left:121.2px;top:532.72px;font-size:12.2px;font-weight:700;color:#003a2a;">Оплата</span>
<span class="t" style="left:182.7px;top:532.72px;font-size:12.2px;font-weight:700;color:#003a2a;">Возвраты</span>
<span class="t" style="left:259.5px;top:532.72px;font-size:12.2px;font-weight:700;color:#003a2a;">Итого</span>
<span class="t" style="left:41.3px;top:564.42px;font-size:12.2px;font-weight:700;color:#003a2a;">Итого</span>
<svg style="position:absolute;left:998px;top:183.3px" width="5" height="3" viewBox="0 0 5 3"><path d="M0 2.800L2.300 0l2.300 2.800z" fill="#bdbdbd"/></svg>
<div style="position:absolute;left:997.6px;top:193.3px;width:5.4px;height:373.7px;background:#dadada;border-radius:2.700px;"></div>
<div style="position:absolute;left:997.6px;top:193.3px;width:5.4px;height:198.7px;background:#9c9c9c;border-radius:2.700px;"></div>
<svg style="position:absolute;left:998px;top:574.8px" width="5" height="3" viewBox="0 0 5 3"><path d="M0 0h4.600L2.300 2.800z" fill="#444"/></svg>
<svg style="position:absolute;left:20.3px;top:587px" width="3" height="5" viewBox="0 0 3 5"><path d="M2.800 0v4.600L0 2.300z" fill="#bdbdbd"/></svg>
<div style="position:absolute;left:31px;top:586.8px;width:946.5px;height:5.6px;background:#dadada;border-radius:2.800px;"></div>
<div style="position:absolute;left:31px;top:586.8px;width:857px;height:5.6px;background:#9c9c9c;border-radius:2.800px;"></div>
<svg style="position:absolute;left:985.3px;top:587.4px" width="4" height="5" viewBox="0 0 4 5"><path d="M0 0v4.600l3-2.300z" fill="#444"/></svg>
<svg style="position:absolute;left:11.5px;top:611.5px" width="12" height="10" viewBox="0 0 12 10"><path d="M6 .4L.3 5.500H1.600V9.300H4.900V6.300H7.100V9.300H10.400V5.500H11.700z" fill="#484848"/></svg>
<span class="t" style="left:31px;top:609.56px;font-size:10.5px;font-weight:400;color:#3c3c3c;letter-spacing:-.12px;transform:scaleX(0.914);transform-origin:left center;">Начальная страница</span>
<div style="position:absolute;left:134.5px;top:605px;width:1px;height:23px;background:#cfcfcf;"></div>
<span class="t" style="left:142.5px;top:609.56px;font-size:10.5px;font-weight:400;color:#3c3c3c;transform:scaleX(0.914);transform-origin:left center;">Отчеты раздела "Продажи"</span>
<svg style="position:absolute;left:270px;top:614px" width="6" height="6" viewBox="0 0 6 6"><path d="M.6 .6l4.800 4.800M5.400 .6L.6 5.400" stroke="#484848" stroke-width="1.500"/></svg>
<div style="position:absolute;left:281.5px;top:605px;width:134px;height:23px;background:#fff;border-left:1px solid #cfcfcf;border-right:1px solid #cfcfcf;box-sizing:border-box;"></div>
<span class="t" style="left:289.5px;top:609.56px;font-size:10.5px;font-weight:400;color:#3c3c3c;transform:scaleX(0.914);transform-origin:left center;">Отчет старшего кассира</span>
<svg style="position:absolute;left:403.8px;top:614px" width="6" height="6" viewBox="0 0 6 6"><path d="M.6 .6l4.800 4.800M5.400 .6L.6 5.400" stroke="#484848" stroke-width="1.500"/></svg>
<div style="position:absolute;left:284.5px;top:625px;width:128px;height:2px;background:#2ea356;"></div>
</body></html>
